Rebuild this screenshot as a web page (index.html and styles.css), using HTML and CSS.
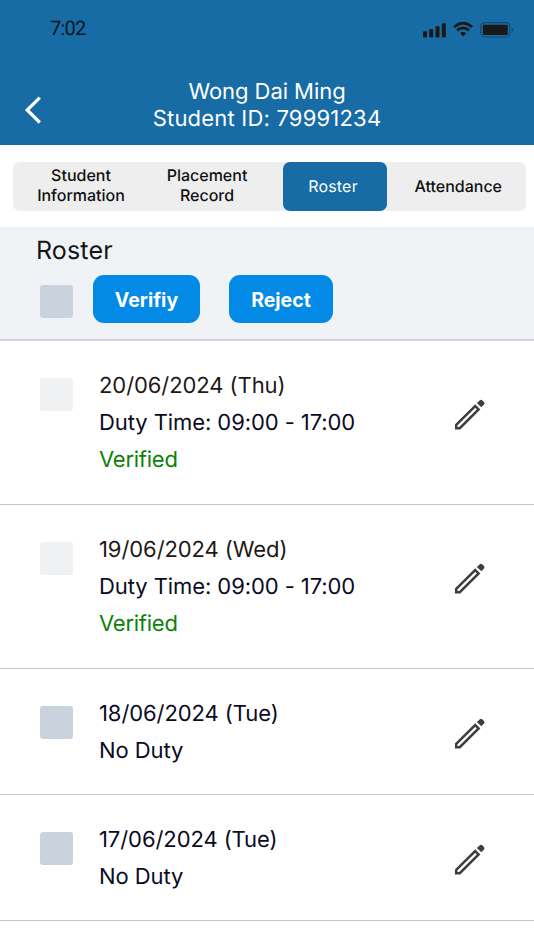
FILE: index.html
```html
<!DOCTYPE html>
<html lang="en">
<head>
<meta charset="utf-8">
<title>Roster</title>
<link rel="stylesheet" href="styles.css">
</head>
<body>
<svg class="defs" width="0" height="0" aria-hidden="true">
  <symbol id="pencil" viewBox="0 0 32 32">
    <path d="M2.2 25.9 21.2 7 24.6 10.4 5.8 29.2H2.2Z" fill="none" stroke="#3e3e3e" stroke-width="2.5"/>
    <path d="M22.8 4.1 25.6 1.4Q27 .2 28.4 1.4L30 3Q31 4.3 30 5.6L27.3 8.3Z" fill="#3e3e3e"/>
  </symbol>
</svg>
<header class="header">
  <div class="status">
    <span class="time">7:02</span>
    <svg class="status-icons" width="92" height="18" viewBox="0 0 92 18">
      <g fill="#191919">
        <rect x="1" y="11.2" width="4" height="6.2" rx="1"/>
        <rect x="7.2" y="9" width="4" height="8.4" rx="1"/>
        <rect x="13.5" y="6.2" width="4" height="11.2" rx="1"/>
        <rect x="19.8" y="3.2" width="4" height="14.2" rx="1"/>
        <rect x="60.8" y="4.7" width="25" height="10.4" rx="1.4"/>
      </g>
      <g fill="none" stroke="#191919" stroke-width="2.7">
        <path d="M32.1 7Q41.1-.9 50.1 7"/>
        <path d="M35.1 10.4Q41.1 5.4 47.1 10.4"/>
      </g>
      <path d="M38 13.2Q41.1 10.8 44.2 13.2L41.1 16.6Z" fill="#191919"/>
      <rect x="58.8" y="2.6" width="29" height="14.4" rx="4" fill="none" stroke="#16496e" stroke-width="1.2"/>
      <path d="M89.6 7.8Q91.4 8.4 91.4 9.8T89.6 11.8Z" fill="#16496e"/>
    </svg>
  </div>
  <div class="titlebar">
    <svg class="back" width="18" height="28" viewBox="0 0 18 28"><path d="M15.8 1.7 3.2 14 15.8 26.5" fill="none" stroke="#fff" stroke-width="3.2"/></svg>
    <div class="title">Wong Dai Ming<br><span class="student-id">Student ID: 79991234</span></div>
  </div>
</header>
<nav class="tabs">
  <div class="tab">Student<br>Information</div>
  <div class="tab record">Placement<br>Record</div>
  <div class="tab active">Roster</div>
  <div class="tab wide">Attendance</div>
</nav>
<section class="toolbar">
  <h1>Roster</h1>
  <div class="actions">
    <span class="check"></span>
    <button class="verify">Verifiy</button>
    <button class="reject">Reject</button>
  </div>
</section>
<main>
  <article class="row">
    <span class="check off"></span>
    <div class="info"><p class="past">20/06/2024 (Thu)</p><p class="duty">Duty Time: 09:00 - 17:00</p><p class="ok">Verified</p></div>
    <svg class="edit"><use href="#pencil"/></svg>
  </article>
  <article class="row">
    <span class="check off"></span>
    <div class="info"><p class="past">19/06/2024 (Wed)</p><p class="duty">Duty Time: 09:00 - 17:00</p><p class="ok">Verified</p></div>
    <svg class="edit"><use href="#pencil"/></svg>
  </article>
  <article class="row short">
    <span class="check"></span>
    <div class="info"><p>18/06/2024 (Tue)</p><p>No Duty</p></div>
    <svg class="edit"><use href="#pencil"/></svg>
  </article>
  <article class="row short">
    <span class="check"></span>
    <div class="info"><p>17/06/2024 (Tue)</p><p>No Duty</p></div>
    <svg class="edit"><use href="#pencil"/></svg>
  </article>
</main>
</body>
</html>
```
FILE: styles.css
```css
* { box-sizing: border-box; }
body { margin: 0; background: #fff; font-family: Inter, "Liberation Sans", sans-serif; color: #0b0a24; text-rendering: geometricPrecision; }
h1, p { margin: 0; font-weight: 400; }
.defs { display: block; height: 0; }
.header { height: 145px; background: #186ca5; }
.status { display: flex; justify-content: space-between; height: 77px; padding: 16px 20px 0 50px; }
.time { font: 20px/24px Roboto, sans-serif; letter-spacing: -.8px; color: #071620; }
.status-icons { margin-top: 4px; }
.titlebar { display: grid; grid-template-columns: 534px; color: #fff; }
.back { grid-area: 1 / 1; margin: 19px 0 0 24px; }
.title { grid-area: 1 / 1; padding-top: 2px; text-align: center; font-size: 22px; line-height: 27px; letter-spacing: -.05px; }
.student-id { letter-spacing: .2px; }
.tabs { display: flex; width: 513px; height: 49px; margin: 17px 8px 16px 12.5px; background: #eee; border-radius: 7px; font-size: 16px; font-weight: 500; line-height: 20.5px; color: #111; }
.tab { display: flex; flex: none; align-items: center; justify-content: center; width: 137px; padding-bottom: 3px; text-align: center; }
.tab.record { width: 115px; margin-right: 18.5px; }
.tab.active { width: 104px; height: 49px; padding: 0 4px 0 0; background: #186ca5; border-radius: 7px; color: #fff; font-weight: 400; letter-spacing: .2px; }
.tab.wide { width: 142.5px; padding: 0; }
.toolbar { height: 114px; padding-top: 6px; background: #eff3f6; border-bottom: 2px solid #d1d3dc; }
h1 { margin-left: 36px; font-size: 25px; line-height: 36px; letter-spacing: .15px; color: #151515; }
.actions { display: flex; padding: 6px 0 0 40px; }
.check { flex: none; width: 33px; height: 33px; border-radius: 3px; background: #cad3dd; }
.check.off { background: #f0f1f3; }
.actions .check { margin-top: 10px; }
button { height: 48px; padding: 2px 0 0; border: 0; border-radius: 11px; background: #028ae6; color: #fff; font: 700 19.5px/46px Inter, sans-serif; }
.verify { width: 107px; margin-left: 20px; }
.reject { width: 104px; margin-left: 29px; }
.row { display: flex; height: 164px; padding: 26px 48px 0 40px; border-bottom: 1px solid #c5c6cf; }
.row.short { height: 126px; }
.row .check { margin-top: 11px; }
.info { flex: 1; margin: 1px 0 0 26px; font-size: 22px; line-height: 37px; letter-spacing: -.08px; white-space: nowrap; }
.past { color: #1f1717; }
.ok { color: #0a820a; letter-spacing: -.25px; }
.edit { flex: none; width: 32px; height: 32px; margin-top: 32px; }
.short .edit { margin-top: 23px; }
```
